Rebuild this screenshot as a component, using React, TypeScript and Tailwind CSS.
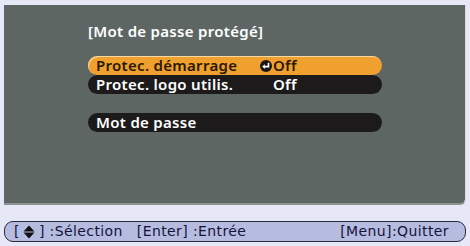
const font = "font-['DejaVu_Sans',sans-serif]";
const menuFont = "font-['Noto_Sans',sans-serif] font-semibold tracking-[0.3px]";

function EnterIcon() {
  return (
    <svg width="12" height="12" viewBox="0 0 12 12" className="shrink-0">
      <circle cx="6" cy="6" r="6" fill="#1a1616" />
      <path d="M8.5 2.8 V6.6 H4" stroke="#fff" strokeWidth="1.6" fill="none" />
      <path d="M2.3 6.6 L4.8 4.3 V8.9 Z" fill="#fff" />
    </svg>
  );
}

function UpDown() {
  return (
    <svg width="12" height="14" viewBox="0 0 12 14" className="ml-[3px] mr-[4px]">
      <path d="M6 0.5 L11.5 6.4 H0.5 Z" fill="#111" />
      <path d="M6 13.5 L11.5 7.6 H0.5 Z" fill="#111" />
    </svg>
  );
}

export default function App() {
  return (
    <div className={`w-[470px] h-[246px] bg-[#e7e8f7] pt-[5px] px-[4px] ${font}`}>
      <div className={`h-[200px] bg-[#5e6664] border-b-2 border-r border-[#8d9290] border-r-[#d8dad8] rounded-br-md pl-[84px] pt-[16px] ${menuFont}`}>
        <div className="text-white text-[15px] leading-[20px]">
          [Mot de passe protégé]
        </div>

        <div className="mt-[15px] w-[294px] flex flex-col">
          <div className="h-[19px] rounded-full bg-[#f0a02e] shadow-[inset_1px_1px_0_#f8d8a0] flex items-center pl-[8px] text-[#2a1800] text-[15px]">
            <span className="w-[164px] whitespace-nowrap">Protec. démarrage</span>
            <EnterIcon />
            <span className="ml-[1px]">Off</span>
          </div>
          <div className="h-[19px] rounded-full bg-[#1c1a1a] flex items-center pl-[8px] text-white text-[15px]">
            <span className="w-[177px] whitespace-nowrap">Protec. logo utilis.</span>
            <span>Off</span>
          </div>
          <div className="mt-[19px] h-[19px] rounded-full bg-[#1c1a1a] flex items-center pl-[8px] text-white text-[15px]">
            Mot de passe
          </div>
        </div>
      </div>

      <div className="mt-[16px] h-[21px] rounded-[9px] border border-[#2a2a3a] bg-[#b6bce0] flex items-center pl-[9px] pr-[16px] text-[#14143a] text-[14px] tracking-[0.4px] whitespace-pre">
        <span className="flex items-center">
          [<UpDown />] :Sélection
        </span>
        <span className="ml-[14px]">[Enter] :Entrée</span>
        <span className="ml-auto">[Menu]:Quitter</span>
      </div>
    </div>
  );
}
